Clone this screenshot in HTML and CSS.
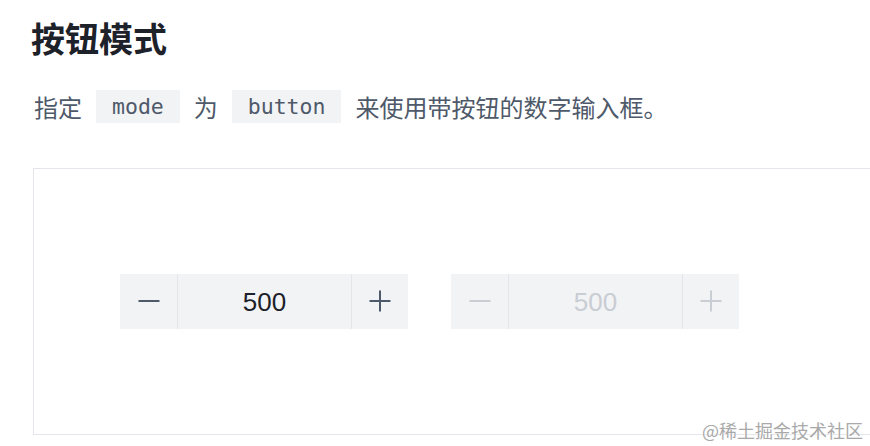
FILE: index.html
```html
<!DOCTYPE html>
<html lang="zh-CN">
<head>
<meta charset="utf-8">
<title>按钮模式</title>
<link rel="stylesheet" href="styles.css">
</head>
<body>
<div class="page">
  <h2 class="title">按钮模式</h2>
  <p class="desc">指定<code class="chip">mode</code>为<code class="chip">button</code>来使用带按钮的数字输入框。</p>
  <div class="demo">
    <div class="num">
      <span class="step step-minus"><svg viewBox="0 0 22 22" width="22" height="22"><path d="M0.5 11h21" /></svg></span>
      <span class="value">500</span>
      <span class="step step-plus"><svg viewBox="0 0 22 22" width="22" height="22"><path d="M0.5 11h21M11 0.5v21" /></svg></span>
    </div>
    <div class="num num-disabled">
      <span class="step step-minus"><svg viewBox="0 0 22 22" width="22" height="22"><path d="M0.5 11h21" /></svg></span>
      <span class="value">500</span>
      <span class="step step-plus"><svg viewBox="0 0 22 22" width="22" height="22"><path d="M0.5 11h21M11 0.5v21" /></svg></span>
    </div>
  </div>
  <div class="watermark">@稀土掘金技术社区</div>
</div>
</body>
</html>
```
FILE: styles.css
```css
html, body {
  margin: 0;
  padding: 0;
  background: #ffffff;
  overflow: hidden;
}
.page {
  position: relative;
  width: 870px;
  height: 446px;
  overflow: hidden;
  font-family: "Noto Sans CJK SC", "Noto Sans", sans-serif;
}
.title {
  margin: 0;
  padding: 14px 0 0 31px;
  font-size: 34px;
  line-height: 48px;
  font-weight: 700;
  color: #1d2129;
}
.desc {
  margin: 0;
  padding: 28px 0 0 34px;
  height: 33px;
  display: flex;
  align-items: center;
  font-size: 24px;
  line-height: 33px;
  color: #4e5969;
}
.chip {
  display: inline-block;
  height: 33px;
  line-height: 33px;
  padding: 0 16px;
  margin: 0 14px;
  background: #f2f3f5;
  font-family: "DejaVu Sans Mono", "Liberation Mono", monospace;
  font-size: 21.5px;
  color: #4e5969;
}
.demo {
  margin: 45px 0 0 33px;
  width: 900px;
  height: 265px;
  border: 1px solid #e5e6eb;
  box-sizing: content-box;
  display: flex;
  align-items: center;
  gap: 43px;
  padding-left: 86px;
}
.num {
  display: flex;
  height: 55px;
  margin-bottom: 1px;
  background: #f2f3f5;
}
.step {
  width: 57px;
  display: flex;
  align-items: center;
  justify-content: center;
  color: #4e5969;
}
.step svg {
  fill: none;
  stroke: currentColor;
  stroke-width: 2;
}
.step-minus {
  border-right: 1px solid #e5e6eb;
}
.step-plus {
  border-left: 1px solid #e5e6eb;
  width: 56px;
}
.value {
  width: 173px;
  display: flex;
  align-items: center;
  justify-content: center;
  padding-top: 3px;
  box-sizing: border-box;
  font-family: "Liberation Sans", Arial, sans-serif;
  font-size: 26px;
  color: #1d2129;
}
.num-disabled .step,
.num-disabled .value {
  color: #c9cdd4;
}
.watermark {
  position: absolute;
  right: 7px;
  bottom: 5px;
  font-size: 18px;
  line-height: 22px;
  color: #a9a9a9;
  text-shadow: 0 0 2px #ffffff, 0 0 2px #ffffff;
}
```
